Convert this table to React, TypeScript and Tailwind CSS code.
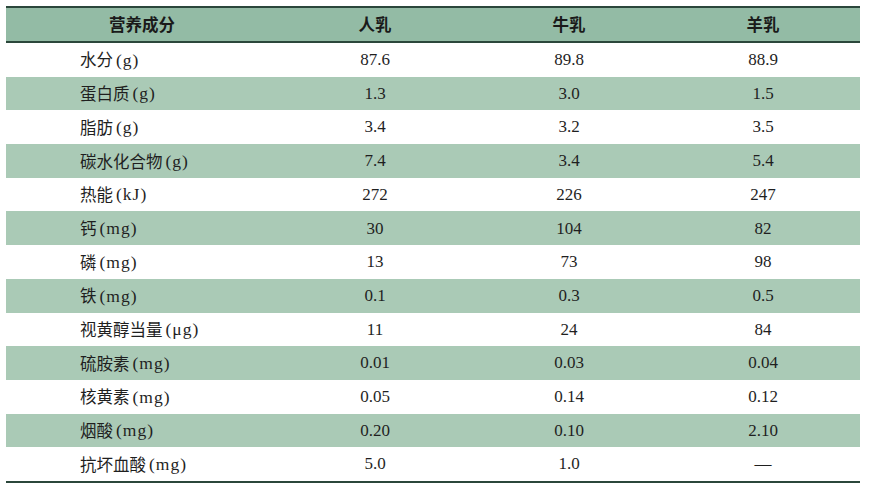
import React from "react";

const rows: [string, string, string, string][] = [
  ["水分(g)", "87.6", "89.8", "88.9"],
  ["蛋白质(g)", "1.3", "3.0", "1.5"],
  ["脂肪(g)", "3.4", "3.2", "3.5"],
  ["碳水化合物(g)", "7.4", "3.4", "5.4"],
  ["热能(kJ)", "272", "226", "247"],
  ["钙(mg)", "30", "104", "82"],
  ["磷(mg)", "13", "73", "98"],
  ["铁(mg)", "0.1", "0.3", "0.5"],
  ["视黄醇当量(μg)", "11", "24", "84"],
  ["硫胺素(mg)", "0.01", "0.03", "0.04"],
  ["核黄素(mg)", "0.05", "0.14", "0.12"],
  ["烟酸(mg)", "0.20", "0.10", "2.10"],
  ["抗坏血酸(mg)", "5.0", "1.0", "—"],
];

function Label({ text }: { text: string }) {
  const i = text.indexOf("(");
  const zh = text.slice(0, i);
  const unit = text.slice(i + 1, -1);
  return (
    <span className="flex items-center">
      <span style={{ fontFamily: '"Noto Sans CJK SC", sans-serif' }} className="text-[16.5px]">
        {zh}
      </span>
      <span
        style={{ fontFamily: '"Liberation Serif", serif' }}
        className="text-[17.5px] ml-[3px] tracking-[1px]"
      >
        ({unit})
      </span>
    </span>
  );
}

export default function App() {
  return (
    <div className="w-[869px] h-[495px] bg-white pt-[6px] pl-[6px]">
      <div className="w-[854px] text-[#1f1f1f]">
        <div
          className="grid grid-cols-[272px_1fr_1fr_1fr] h-[37px] border-t-2 border-b-2 border-[#2b473b] bg-[#93bba5] items-center font-bold text-[16.5px] text-[#1a1a1a]"
          style={{ fontFamily: '"Noto Sans CJK SC", sans-serif' }}
        >
          <div className="text-center">营养成分</div>
          <div className="text-center">人乳</div>
          <div className="text-center">牛乳</div>
          <div className="text-center">羊乳</div>
        </div>
        {rows.map((r, idx) => (
          <div
            key={idx}
            className={`grid grid-cols-[272px_1fr_1fr_1fr] h-[33.7px] items-center ${
              idx % 2 === 1 ? "bg-[#aacab6]" : "bg-white"
            }`}
          >
            <div className="pl-[74px]">
              <Label text={r[0]} />
            </div>
            {r.slice(1).map((v, j) => (
              <div
                key={j}
                className="text-center text-[17px]"
                style={{ fontFamily: '"Liberation Serif", serif' }}
              >
                {v}
              </div>
            ))}
          </div>
        ))}
        <div className="h-[2px] bg-[#2b473b]" />
      </div>
    </div>
  );
}
